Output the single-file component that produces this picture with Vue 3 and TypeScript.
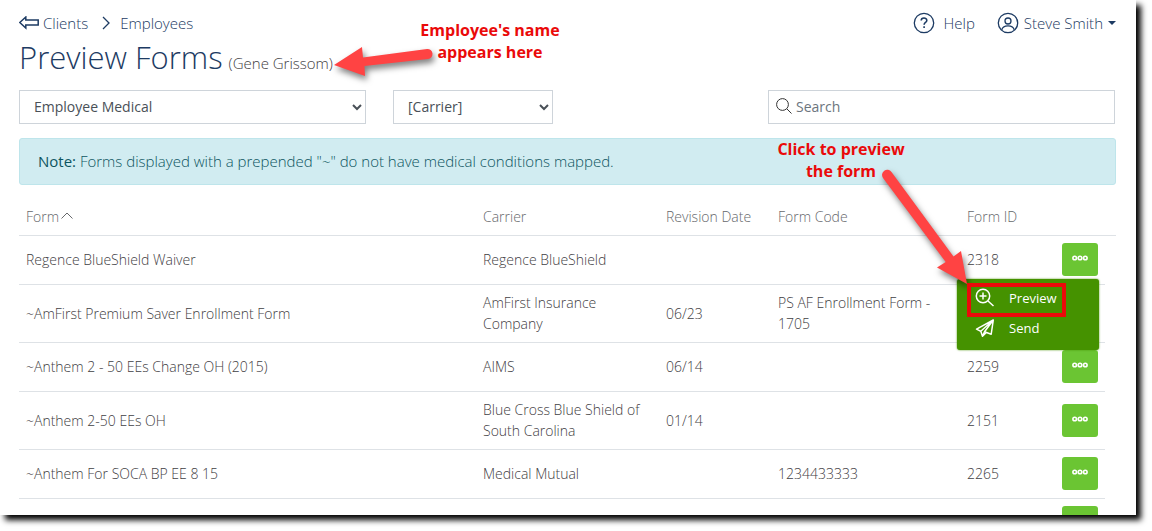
<script setup lang="ts">
import { ref } from 'vue'

interface FormRow {
  name: string
  carrier: string
  revision: string
  code: string
  id: string
}

const rows: FormRow[] = [
  { name: 'Regence BlueShield Waiver', carrier: 'Regence BlueShield', revision: '', code: '', id: '2318' },
  { name: '~AmFirst Premium Saver Enrollment Form', carrier: 'AmFirst Insurance Company', revision: '06/23', code: 'PS AF Enrollment Form - 1705', id: '' },
  { name: '~Anthem 2 - 50 EEs Change OH (2015)', carrier: 'AIMS', revision: '06/14', code: '', id: '2259' },
  { name: '~Anthem 2-50 EEs OH', carrier: 'Blue Cross Blue Shield of South Carolina', revision: '01/14', code: '', id: '2151' },
  { name: '~Anthem For SOCA BP EE 8 15', carrier: 'Medical Mutual', revision: '', code: '1234433333', id: '2265' },
  { name: '', carrier: '', revision: '', code: '', id: '' },
]

const openRow = ref<number>(0)
const formType = ref('Employee Medical')
const carrier = ref('[Carrier]')
const search = ref('')

function toggle(index: number): void {
  openRow.value = openRow.value === index ? -1 : index
}
</script>

<template>
  <main class="panel">
    <header class="topbar">
      <nav class="crumbs" aria-label="Breadcrumb">
        <a href="#clients" class="crumb">
          <svg class="back" viewBox="0 0 20 14" aria-hidden="true"><path d="M6.800 1 .8 6.500l6 5.500V8.900h12.400V4.100H6.800z" /></svg>
          <span>Clients</span>
        </a>
        <svg class="chevron" viewBox="0 0 8 14" aria-hidden="true"><path d="M1 1l6 6-6 6" /></svg>
        <a href="#employees">Employees</a>
      </nav>
      <div class="account">
        <a href="#help" class="help">
          <svg class="round" viewBox="0 0 22 22" aria-hidden="true">
            <circle cx="11" cy="11" r="9.700" />
            <path class="mark" d="M8.200 8.600c0-3.400 5.600-3.300 5.600-.2 0 2-2.700 2-2.700 4.300M11.100 14.200v1.700" />
          </svg>
          <span>Help</span>
        </a>
        <button type="button" class="user">
          <svg class="round" viewBox="0 0 22 22" aria-hidden="true">
            <circle cx="11" cy="11" r="9.700" />
            <circle cx="11" cy="9" r="3" />
            <path d="M4.800 17.900c.8-5.500 11.600-5.500 12.400 0" />
          </svg>
          <span>Steve Smith</span>
          <svg class="caret" viewBox="0 0 8 4" aria-hidden="true"><path d="M0 0h8L4 4z" /></svg>
        </button>
      </div>
    </header>

    <h1>Preview Forms <small>(Gene Grissom)</small></h1>

    <div class="filters">
      <select v-model="formType" class="wide" aria-label="Form type"><option>Employee Medical</option></select>
      <select v-model="carrier" class="narrow" aria-label="Carrier"><option>[Carrier]</option></select>
      <label class="search">
        <svg viewBox="0 0 16 16" aria-hidden="true"><circle cx="6.500" cy="6.500" r="5.900" /><path d="M10.800 10.800l4.700 4.700" /></svg>
        <input v-model="search" type="text" placeholder="Search" aria-label="Search" />
      </label>
    </div>

    <p class="note"><strong>Note:</strong> Forms displayed with a prepended "~" do not have medical conditions mapped.</p>

    <table>
      <colgroup>
        <col /><col class="c-carrier" /><col class="c-rev" /><col class="c-code" /><col class="c-id" /><col class="c-act" /><col class="c-end" />
      </colgroup>
      <thead>
        <tr>
          <th scope="col">Form<svg class="sort" viewBox="0 0 12 7" aria-hidden="true"><path d="M.5 6.500l5.500-5.500 5.500 5.500" /></svg></th>
          <th scope="col">Carrier</th>
          <th scope="col">Revision Date</th>
          <th scope="col">Form Code</th>
          <th scope="col">Form ID</th>
          <th></th>
          <th></th>
        </tr>
      </thead>
      <tbody>
        <tr v-for="(row, i) in rows" :key="i">
          <td>{{ row.name }}</td>
          <td>{{ row.carrier }}</td>
          <td>{{ row.revision }}</td>
          <td>{{ row.code }}</td>
          <td>{{ row.id }}</td>
          <td>
            <div class="actions">
              <button type="button" class="more" aria-label="Actions" :aria-expanded="openRow === i" @click="toggle(i)">
                <svg viewBox="0 0 16 6" aria-hidden="true"><circle cx="2.700" cy="3" r="1.800" /><circle cx="8" cy="3" r="1.800" /><circle cx="13.300" cy="3" r="1.800" /></svg>
              </button>
              <div v-if="openRow === i" class="menu">
                <button type="button">
                  <svg viewBox="0 0 20 20" aria-hidden="true"><circle cx="8" cy="8" r="6.700" /><path d="M8 4.500v7M4.500 8h7M13 13l5.500 5" /></svg>
                  <span>Preview</span>
                </button>
                <button type="button">
                  <svg viewBox="0 0 20 20" aria-hidden="true"><path d="M18.300 2 1.500 11.200l4.300 2.100L18.300 2l-2.100 14.200-6.700-2.400L18.300 2M5.800 13.300l1.700 4.900 2-4.400M7.500 18.200l3.800-3.700" /></svg>
                  <span>Send</span>
                </button>
              </div>
            </div>
          </td>
          <td></td>
        </tr>
      </tbody>
    </table>

    <div class="callout name-callout">
      <p>Employee's name<br />appears here</p>
      <svg viewBox="0 0 110 40" aria-hidden="true"><path d="M4 25 32 7 33 17.500 97 9A5 5 0 0 1 98 19L34.500 26 35 36z" /></svg>
    </div>
    <div class="callout preview-callout">
      <p>Click to preview<br />the form</p>
      <svg viewBox="0 0 100 125" aria-hidden="true"><path d="M87 119 81 86 73.500 91.500 11.500 7A5 5 0 0 0 3 13L65.700 97 57 102.500z" /></svg>
      <div class="frame"></div>
    </div>
  </main>
</template>

<style>
body {
  background: #fff;
}
#app {
  height: 100vh;
  overflow: hidden;
}
</style>

<style scoped>
.panel {
  position: relative;
  box-sizing: border-box;
  height: calc(100vh - 16px);
  margin-right: 16px;
  padding: 12px 20px 0 19px;
  overflow: clip;
  background: #fff;
  box-shadow: 5px 5px 6px #000;
  color: #3f4043;
  font: 300 14px/21px "Open Sans", sans-serif;
}
svg {
  flex: none;
  fill: none;
  stroke: currentColor;
}
a,
button {
  color: inherit;
  text-decoration: none;
}
button {
  padding: 0;
  border: 0;
  background: none;
  font: inherit;
  cursor: pointer;
}
.topbar,
.crumbs,
.crumb,
.account,
.help,
.user {
  display: flex;
  align-items: center;
}
.topbar {
  justify-content: space-between;
  height: 22px;
  color: #1d3b63;
  font-size: 15px;
}
.crumb {
  gap: 4px;
}
.back {
  width: 20px;
  height: 14px;
  stroke-width: 1.5;
}
.chevron {
  width: 8px;
  height: 14px;
  margin: 0 10px 0 14px;
  stroke-width: 1.3;
}
.account {
  gap: 22px;
}
.help {
  gap: 8px;
}
.user {
  gap: 5px;
}
.round {
  width: 22px;
  height: 22px;
  stroke-width: 1.3;
}
.mark {
  stroke-width: 1.6;
}
.caret {
  width: 8px;
  height: 4px;
  fill: currentColor;
  stroke: none;
}
h1 {
  display: flex;
  align-items: baseline;
  gap: 6px;
  margin: 2px 0 6px;
  color: #1d3b63;
  font-size: 31px;
  font-weight: 300;
  line-height: 42px;
}
h1 small {
  color: #3f4043;
  font-size: 15px;
}
.filters {
  display: flex;
  align-items: center;
  margin-right: 1px;
}
select,
.search {
  box-sizing: border-box;
  height: 34px;
  border: 1px solid #ced4da;
  background: #fff;
  color: #495057;
  font: 400 14px/21px "Open Sans", sans-serif;
}
select {
  padding: 0 0 2px 10px;
  border-radius: 0;
}
.wide,
.search {
  flex: 0 1 347px;
}
.narrow {
  flex: 0 1 160px;
  margin-left: 27px;
}
.search {
  display: flex;
  align-items: center;
  gap: 4px;
  margin-left: auto;
  padding: 0 7px 2px;
}
.search svg {
  width: 16px;
  height: 16px;
  margin-bottom: 1px;
  color: #333;
}
.search input {
  flex: 1;
  min-width: 0;
  padding: 0;
  border: 0;
  outline: 0;
  color: inherit;
  font: inherit;
}
.search input::placeholder {
  color: #6c757d;
}
.note {
  margin: 14px 0 16px;
  padding: 12px 18px;
  border: 1px solid #bee5eb;
  border-radius: 3px;
  background: #d1ecf1;
  color: #0c5460;
  font-size: 15px;
}
.note strong {
  font-weight: 400;
}
table {
  width: 100%;
  table-layout: fixed;
  border-spacing: 0;
}
.c-carrier {
  width: 183px;
}
.c-rev {
  width: 112px;
}
.c-code {
  width: 189px;
}
.c-id {
  width: 95px;
}
.c-act {
  width: 50px;
}
.c-end {
  width: 11px;
}
th,
td {
  padding: 7px 7px 8px;
  border-bottom: 1px solid #dee2e6;
  text-align: left;
}
th {
  padding: 5px 7px 8px;
  color: #66686b;
  font-weight: 300;
  white-space: nowrap;
}
td:last-child {
  padding: 0;
  border: 0;
}
.sort {
  width: 12px;
  height: 7px;
  margin: 0 0 3px 2px;
}
.actions {
  position: relative;
  height: 33px;
}
.more {
  display: flex;
  justify-content: center;
  width: 36px;
  height: 33px;
  padding-top: 12px;
  border-radius: 3px;
  background: #6bc533;
  color: #fff;
}
.more svg {
  width: 16px;
  height: 6px;
  stroke-width: 1.6;
}
.menu {
  position: absolute;
  z-index: 1;
  top: 36px;
  right: -1px;
  box-sizing: border-box;
  width: 142px;
  padding: 4px 0 7px;
  border-radius: 3px;
  background: #459200;
  box-shadow: 0 0 2px #459200;
  color: #fff;
}
.menu button {
  display: flex;
  align-items: center;
  gap: 14px;
  width: 100%;
  height: 30px;
  padding-left: 18px;
  font-size: 13px;
  font-weight: 500;
}
.menu svg {
  width: 20px;
  height: 20px;
  stroke-width: 1.5;
  stroke-linejoin: round;
}
.callout {
  position: absolute;
  z-index: 2;
  pointer-events: none;
}
.callout p {
  margin: 0;
  color: #ea0a0a;
  font-size: 16px;
  font-weight: 700;
  line-height: 22px;
  text-align: center;
}
.callout svg {
  position: absolute;
  fill: #ff4343;
  stroke: none;
  filter: drop-shadow(2px 4px 3px rgba(0, 0, 0, 0.5));
}
.name-callout {
  top: 19px;
  left: 410px;
  width: 160px;
}
.name-callout svg {
  top: 21px;
  left: -80px;
  width: 110px;
  height: 40px;
}
.preview-callout {
  top: 138px;
  right: 215px;
  width: 160px;
}
.preview-callout svg {
  top: 27px;
  left: 119px;
  width: 100px;
  height: 125px;
}
.frame {
  position: absolute;
  box-sizing: border-box;
  top: 145px;
  left: 206px;
  width: 99px;
  height: 34px;
  border: 4px solid #ea0a0a;
}
</style>
